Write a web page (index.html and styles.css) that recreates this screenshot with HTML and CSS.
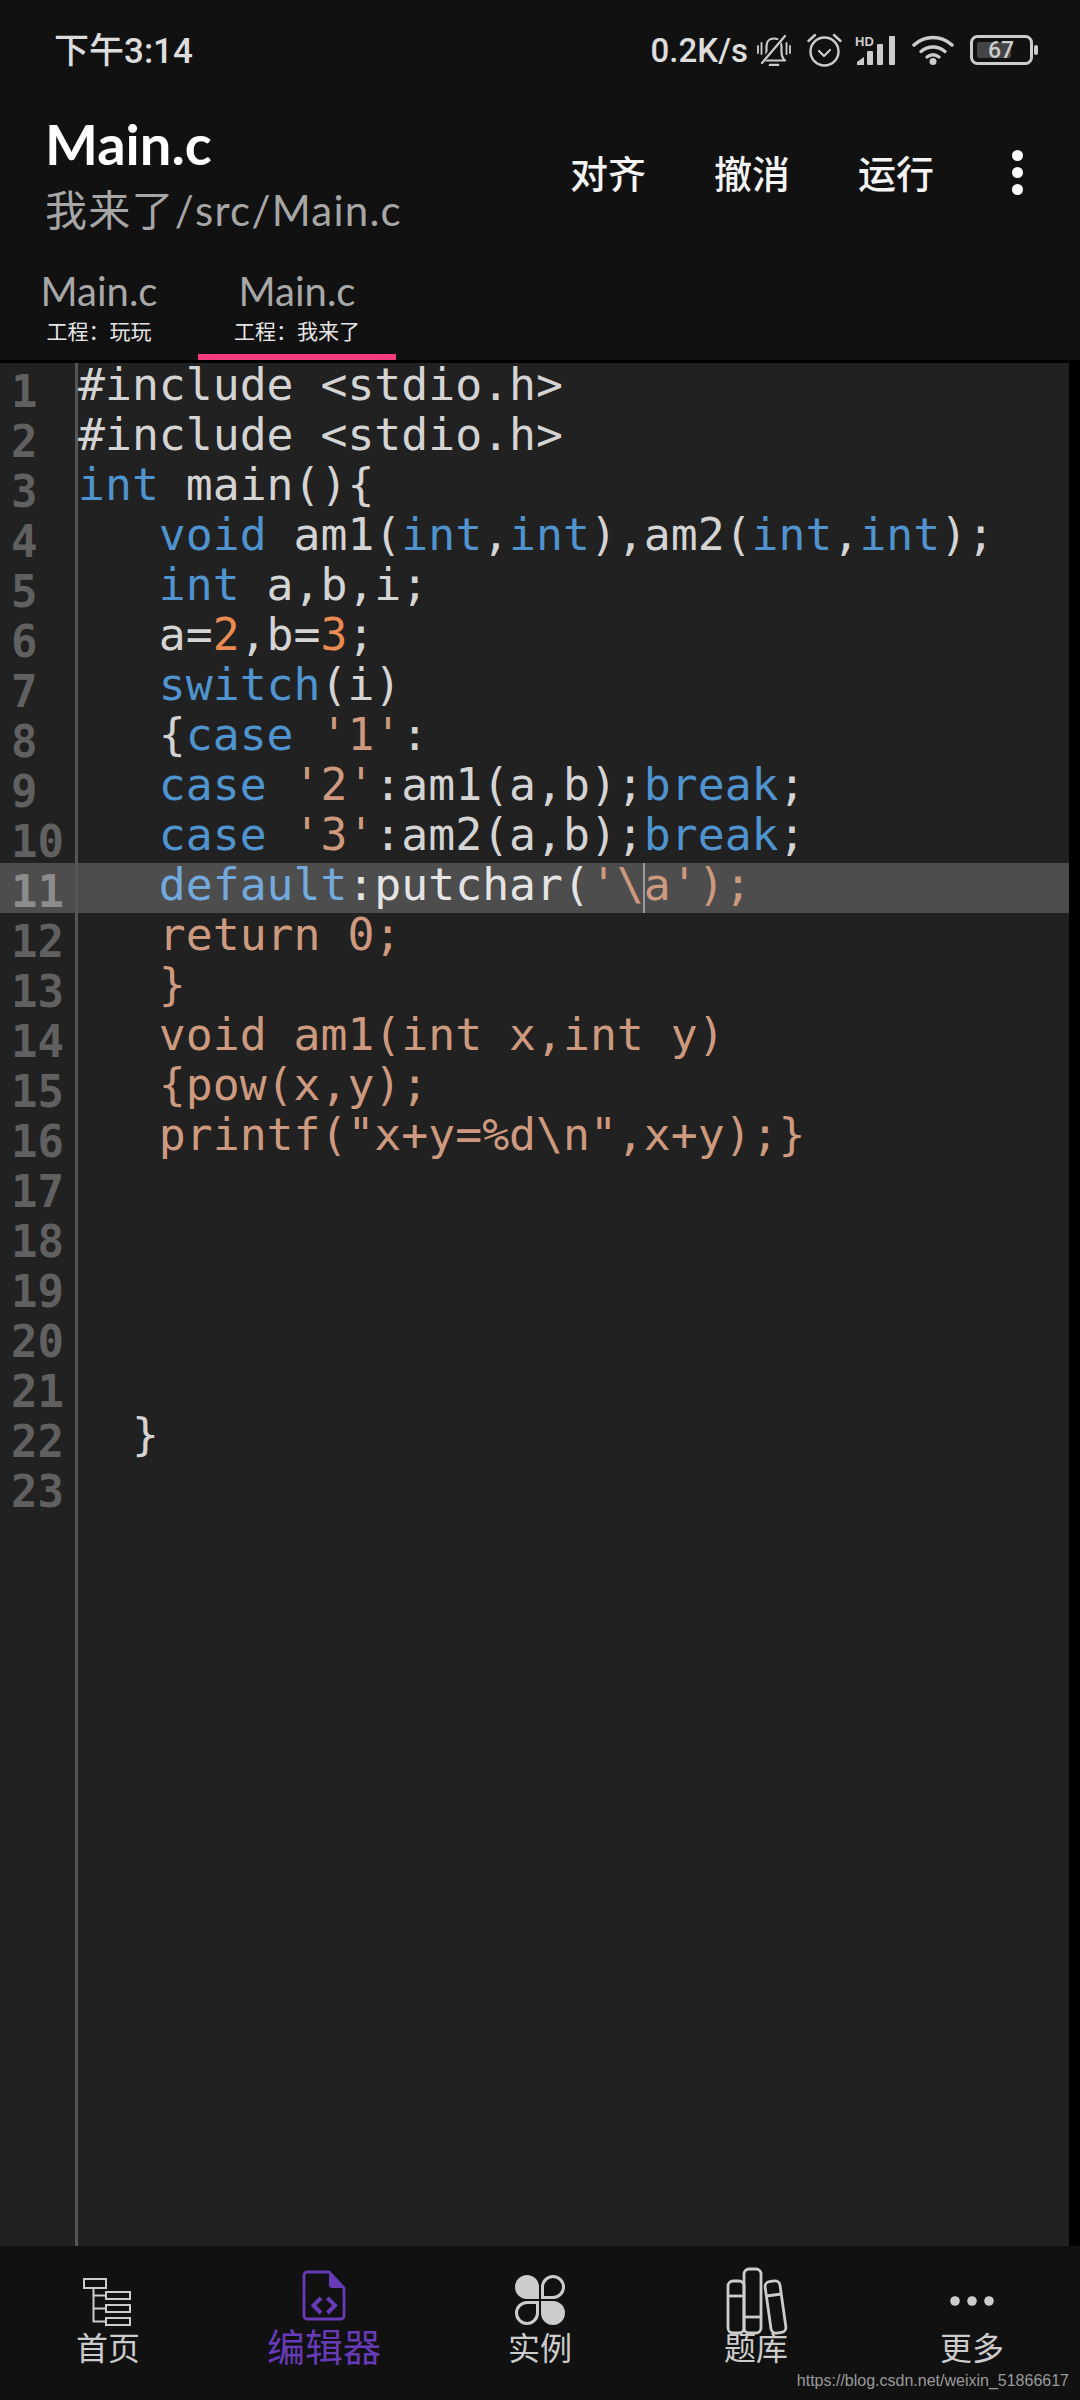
FILE: index.html
```html
<!DOCTYPE html>
<html lang="zh">
<head>
<meta charset="utf-8">
<title>Main.c</title>
<link rel="stylesheet" href="styles.css">
</head>
<body>
<header class="top">
  <div class="status">
    <span class="time">下午3:14</span>
    <div class="status-right">
      <span class="speed">0.2K/s</span>
      <svg class="ic bell" viewBox="0 0 34 32"><g fill="none" stroke="#ccc" stroke-width="2.2" stroke-linecap="round" stroke-linejoin="round"><path d="M6 26.500c2.500-2 3.500-5 3.500-9V12c0-4.500 3-7.500 7.500-7.500s7.500 3 7.500 7.500v5.500c0 4 1 7 3.500 9z"/><path d="M3 30 28 1" stroke="#111" stroke-width="4.500"/><path d="M5 29 28 2"/><path d="M13 31h8" stroke-width="2.600"/><path d="M1 12v7M4.500 9v11M33 12v7M29.500 9v11" stroke-width="1.800"/></g></svg>
      <svg class="ic alarm" viewBox="0 0 35 34"><g fill="none" stroke="#ccc" stroke-width="2.4" stroke-linecap="round" stroke-linejoin="round"><circle cx="17.500" cy="18.500" r="14"/><path d="M1.500 8 8 2M33.500 8 27 2"/><path d="m12 18 5 5 6-6" stroke-width="2.200"/></g></svg>
      <svg class="ic signal" viewBox="0 0 41 30"><text x="0" y="10.500" class="hd">HD</text><g fill="#ccc"><path d="M2 30v-3l7-5v8z"/><rect x="12" y="16" width="6" height="14" rx="1"/><rect x="22" y="9" width="6" height="21" rx="1"/><rect x="34" y="1" width="6" height="29" rx="1"/></g></svg>
      <svg class="ic wifi" viewBox="0 0 42 30"><g fill="none" stroke="#ccc" stroke-width="3.400" stroke-linecap="round"><path d="M2 10C13 0 29 0 40 10"/><path d="M9 16.500c7-6 17-6 24 0"/><path d="M15 22c4-3 8-3 12 0"/></g><circle cx="21" cy="26.500" r="3.500" fill="#ccc"/></svg>
      <svg class="ic battery" viewBox="0 0 68 30"><rect x="1.500" y="1.500" width="60" height="27" rx="6" fill="none" stroke="#ccc" stroke-width="3"/><rect x="7" y="7" width="34" height="16" rx="2" fill="#444"/><rect x="64" y="10" width="4" height="10" rx="2" fill="#ccc"/><text x="18" y="23" class="batt">67</text></svg>
    </div>
  </div>
  <div class="titlebar">
    <div class="titles">
      <div class="title">Main.c</div>
      <div class="subtitle">我来了/src/Main.c</div>
    </div>
    <nav class="actions">
      <span class="action">对齐</span>
      <span class="action">撤消</span>
      <span class="action">运行</span>
      <span class="more"><i></i><i></i><i></i></span>
    </nav>
  </div>
  <div class="tabs">
    <div class="tab"><div class="tab-name">Main.c</div><div class="tab-sub">工程：玩玩</div></div>
    <div class="tab tab-on"><div class="tab-name">Main.c</div><div class="tab-sub">工程：我来了</div></div>
  </div>
</header>

<main class="editor">
  <div class="gutter">
    <div class="n">1</div><div class="n">2</div><div class="n">3</div><div class="n">4</div><div class="n">5</div><div class="n">6</div><div class="n">7</div><div class="n">8</div><div class="n">9</div><div class="n">10</div><div class="n cur">11</div><div class="n">12</div><div class="n">13</div><div class="n">14</div><div class="n">15</div><div class="n">16</div><div class="n">17</div><div class="n">18</div><div class="n">19</div><div class="n">20</div><div class="n">21</div><div class="n">22</div><div class="n">23</div>
  </div>
  <div class="code">
    <div class="l">#include &lt;stdio.h&gt;</div>
    <div class="l">#include &lt;stdio.h&gt;</div>
    <div class="l"><b>int</b> main(){</div>
    <div class="l">   <b>void</b> am1(<b>int</b>,<b>int</b>),am2(<b>int</b>,<b>int</b>);</div>
    <div class="l">   <b>int</b> a,b,i;</div>
    <div class="l">   a=<u>2</u>,b=<u>3</u>;</div>
    <div class="l">   <b>switch</b>(i)</div>
    <div class="l">   {<b>case</b> <s>'1'</s>:</div>
    <div class="l">   <b>case</b> <s>'2'</s>:am1(a,b);<b>break</b>;</div>
    <div class="l">   <b>case</b> <s>'3'</s>:am2(a,b);<b>break</b>;</div>
    <div class="l cur">   <b>default</b>:putchar(<s>'\<span class="caret"></span>a');</s></div>
    <div class="l"><s>   return 0;</s></div>
    <div class="l"><s>   }</s></div>
    <div class="l"><s>   void am1(int x,int y)</s></div>
    <div class="l"><s>   {pow(x,y);</s></div>
    <div class="l"><s>   printf("x+y=%d\n",x+y);}</s></div>
    <div class="l"></div>
    <div class="l"></div>
    <div class="l"></div>
    <div class="l"></div>
    <div class="l"></div>
    <div class="l">  }</div>
    <div class="l"></div>
  </div>
</main>

<footer class="nav">
  <div class="item">
    <svg class="nav-ic" viewBox="0 0 70 66"><g fill="none" stroke="#ccc" stroke-width="2"><rect x="11" y="13" width="22" height="9"/><rect x="33" y="26" width="24" height="7"/><rect x="33" y="39" width="24" height="7"/><rect x="33" y="52" width="24" height="7"/><path d="M20.500 22v33.500H33M20.500 29.500H33M20.500 42.500H33"/></g></svg>
    <span class="lbl">首页</span>
  </div>
  <div class="item item-on">
    <svg class="nav-ic" viewBox="0 0 70 66"><path d="M18 6h22l15 16v28a3 3 0 0 1-3 3H18a3 3 0 0 1-3-3V9a3 3 0 0 1 3-3z" fill="none" stroke="#673ab7" stroke-width="2.800"/><path d="M40 6v13a3 3 0 0 0 3 3h12z" fill="#673ab7"/><path d="m32 32-7.500 7.500L32 47M38.500 32l7.500 7.500-7.500 7.500" fill="none" stroke="#673ab7" stroke-width="4"/></svg>
    <span class="lbl">编辑器</span>
  </div>
  <div class="item">
    <svg class="nav-ic" viewBox="0 0 70 66"><g fill="#ccc"><path d="M34 33H22a12 12 0 1 1 12-12z"/><path d="M36 35h12a12 12 0 1 1-12 12z"/></g><g fill="none" stroke="#ccc" stroke-width="3"><path d="M37.500 31.500V21a10.500 10.500 0 1 1 10.500 10.500z"/><path d="M32.500 36.500V47A10.500 10.500 0 1 1 22 36.500z"/></g></svg>
    <span class="lbl">实例</span>
  </div>
  <div class="item">
    <svg class="nav-ic books" viewBox="0 0 70 66"><g fill="none" stroke="#ccc" stroke-width="2.800"><rect x="7" y="15" width="16" height="52" rx="5"/><path d="M7 30h16"/><rect x="23" y="3" width="17" height="64" rx="5"/><path d="M23 51h17"/><rect x="47" y="15" width="15" height="52" rx="5" transform="rotate(-8 54 41)"/><path d="m45.500 30 15-2"/></g></svg>
    <span class="lbl">题库</span>
  </div>
  <div class="item">
    <svg class="nav-ic" viewBox="0 0 70 66"><g fill="#ccc"><circle cx="18" cy="35" r="4.800"/><circle cx="35" cy="35" r="4.800"/><circle cx="52" cy="35" r="4.800"/></g></svg>
    <span class="lbl">更多</span>
  </div>
  <span class="mark">https://blog.csdn.net/weixin_51866617</span>
</footer>
</body>
</html>
```
FILE: styles.css
```css
* { box-sizing: border-box; }
html, body { margin: 0; padding: 0; }
body {
  width: 1080px;
  height: 2400px;
  background: #000;
  display: flex;
  flex-direction: column;
  font-family: Lato, "Noto Sans CJK SC", sans-serif;
  overflow: hidden;
}

.top {
  height: 360px;
  background: #111;
  flex: none;
  margin-bottom: 3px;
  display: flex;
  flex-direction: column;
}

.status {
  height: 100px;
  padding: 0 42px 0 54px;
  display: flex;
  align-items: center;
  justify-content: space-between;
  color: #ddd;
}
.time {
  font-family: Roboto, "Noto Sans CJK SC", sans-serif;
  font-size: 35px;
  font-weight: 500;
  margin-bottom: 5px;
}
.status-right { display: flex; align-items: center; }
.speed {
  font-family: Roboto, sans-serif;
  font-size: 33px;
  font-weight: 500;
  margin-right: 9px;
}
.ic { display: block; flex: none; }
.bell { width: 34px; height: 32px; }
.alarm { width: 35px; height: 34px; margin-left: 16px; }
.signal { width: 41px; height: 30px; margin-left: 13px; }
.wifi { width: 42px; height: 30px; margin-left: 16px; }
.battery { width: 68px; height: 30px; margin-left: 16px; }
.hd { font: 700 13px "Liberation Sans", sans-serif; fill: #ccc; }
.batt { font: 500 23px Roboto, sans-serif; fill: #ccc; }

.titlebar {
  height: 160px;
  padding-left: 45px;
  display: flex;
  justify-content: space-between;
}
.titles { padding-top: 6px; }
.title {
  color: #fff;
  font-size: 56px;
  font-weight: 700;
  line-height: 76px;
}
.subtitle {
  color: #a6a6a6;
  font-size: 42px;
  line-height: 56px;
  letter-spacing: 1.250px;
}
.actions {
  display: flex;
  align-items: flex-start;
  padding: 47px 57px 0 0;
}
.action {
  color: #f4f4f4;
  font-family: "Noto Sans CJK SC", sans-serif;
  font-size: 38px;
  font-weight: 500;
  line-height: 50px;
  margin-right: 68px;
}
.action:nth-child(3) { margin-right: 78px; }
.more { display: flex; flex-direction: column; gap: 6px; padding-top: 3px; }
.more i { display: block; width: 11px; height: 11px; border-radius: 50%; background: #fff; }

.tabs { display: flex; flex: 1; }
.tab {
  width: 198px;
  text-align: center;
  border-bottom: 6px solid transparent;
}
.tab-on { border-bottom-color: #f43b7e; }
.tab-name { color: #a8a8a8; font-size: 40px; line-height: 62px; margin-bottom: -6px; }
.tab-sub { color: #e6e6e6; font-size: 21px; line-height: 28px; font-family: "Noto Sans CJK SC", sans-serif; }

.editor {
  flex: 1;
  min-height: 0;
  margin-right: 11px;
  background: #212121;
  display: flex;
  font-family: "DejaVu Sans Mono", monospace;
}
.gutter {
  width: 78px;
  flex: none;
  border-right: 3px solid #555;
}
.n {
  height: 50px;
  color: #606060;
  font-size: 44px;
  font-weight: 700;
  line-height: 57px;
  padding-left: 11px;
}
.code { flex: 1; min-width: 0; }
.l {
  height: 50px;
  font-size: 44.750px;
  line-height: 43px;
  color: #d4d4d4;
  white-space: pre;
}
.cur { background: #4d4d4d; }
.n.cur { color: #8c8c8c; }
.l b { font-weight: 400; color: #4f93cf; }
.l u { text-decoration: none; color: #e98b53; }
.l s { text-decoration: none; color: #ce9a7f; }
.l.cur b { color: #73a9dc; }
.l.cur { color: #e4e4e4; }
.caret {
  display: inline-block;
  width: 2px;
  height: 50px;
  margin: 0 -1px;
  vertical-align: top;
  background: #999;
}

.nav {
  position: relative;
  flex: none;
  height: 154px;
  background: #111;
  display: flex;
}
.item {
  width: 216px;
  padding-top: 20px;
  display: flex;
  flex-direction: column;
  align-items: center;
  color: #ccc;
  font-family: "Noto Sans CJK SC", sans-serif;
}
.nav-ic { display: block; width: 70px; height: 66px; overflow: visible; flex: none; margin-bottom: -6px; }
.lbl { font-size: 32px; line-height: 40px; }
.item-on { color: #673ab7; }
.item-on .lbl { font-size: 38px; line-height: 44px; margin-top: -3px; }
.mark {
  position: absolute;
  right: 11px;
  bottom: 9px;
  color: #9a9a9a;
  font: 16px/20px "Liberation Sans", sans-serif;
}
```
